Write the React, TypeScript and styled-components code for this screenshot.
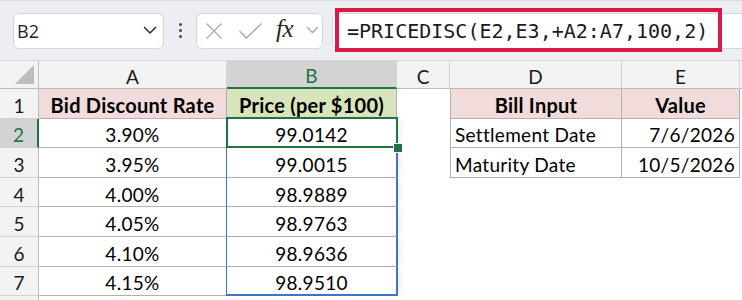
import React from 'react';
import styled, { createGlobalStyle } from 'styled-components';

const GlobalStyle = createGlobalStyle`
  html, body {
    margin: 0;
    padding: 0;
    background: #ffffff;
  }
`;

const GREEN = '#217346';
const BLUE = '#4472c4';
const GRID = '#d4d4d4';
const TABLE_LINE = '#b2b2b2';

const Page = styled.div`
  width: 742px;
  height: 300px;
  overflow: hidden;
  display: flex;
  flex-direction: column;
  background: #ffffff;
`;

const Toolbar = styled.div`
  height: 61px;
  flex: none;
  display: flex;
  align-items: center;
  padding-left: 13px;
  background: #eceef1;
  border-top: 1px solid #d9dbde;
  border-bottom: 1px solid #d6d6d6;
  box-sizing: border-box;
  font-family: 'Open Sans', 'Noto Sans', sans-serif;
`;

const NameBox = styled.div`
  width: 151px;
  height: 36px;
  box-sizing: border-box;
  display: flex;
  align-items: center;
  justify-content: space-between;
  padding: 0 6px 0 3px;
  background: #ffffff;
  border: 1px solid #d5d7da;
  border-radius: 6px;
  font-size: 18px;
  color: #1f1f1f;
`;

const Dots = styled.div`
  width: 32px;
  display: flex;
  flex-direction: column;
  align-items: center;
  gap: 3px;

  > span {
    width: 3px;
    height: 3px;
    border-radius: 50%;
    background: #4a4a4a;
  }
`;

const FxBox = styled.div`
  width: 127px;
  height: 36px;
  box-sizing: border-box;
  display: flex;
  align-items: center;
  padding-left: 8px;
  background: #ffffff;
  border: 1px solid #d5d7da;
  border-radius: 6px;
`;

const IconSlot = styled.div<{ $w: number; $gap?: number }>`
  width: ${(p) => p.$w}px;
  margin-left: ${(p) => p.$gap ?? 0}px;
  display: flex;
  align-items: center;
  justify-content: center;
`;

const FxLabel = styled.span`
  width: 22px;
  margin: -4px 0 0 13px;
  font-family: 'Liberation Serif', 'DejaVu Serif', serif;
  font-style: italic;
  font-size: 25px;
  color: #262626;
  letter-spacing: -0.5px;
`;

const FormulaBox = styled.div`
  position: relative;
  flex: 1;
  height: 36px;
  margin-left: 9px;
  margin-right: -10px;
  box-sizing: border-box;
  display: flex;
  align-items: center;
  padding-left: 14px;
  background: #ffffff;
  border: 1px solid #d5d7da;
  border-radius: 6px;
  font-family: 'DejaVu Sans Mono', 'Liberation Mono', monospace;
  font-size: 20px;
  color: #1a1a1a;
`;

const Annotation = styled.div`
  position: absolute;
  left: 2px;
  top: -6px;
  width: 387px;
  height: 44px;
  box-sizing: border-box;
  border: 4px solid #dc1845;
  pointer-events: none;
`;

const Sheet = styled.div`
  flex: 1;
  display: grid;
  grid-template-columns: 39px 188px 170px 53px 172px 118px 1fr;
  grid-template-rows: 28px repeat(7, 29.6px) 1fr;
  font-family: Lato, 'Noto Sans', sans-serif;
  font-size: 19px;
  color: #000000;
`;

const Corner = styled.div`
  position: relative;
  background: #f3f3f3;
  border-right: 1px solid #bdbdbd;
  border-bottom: 1px solid #bdbdbd;
  overflow: hidden;

  &::after {
    content: '';
    position: absolute;
    right: 4px;
    bottom: 4px;
    border-style: solid;
    border-width: 0 0 19px 19px;
    border-color: transparent transparent #bdbdbd transparent;
  }
`;

const ColHeader = styled.div<{ $active?: boolean }>`
  display: flex;
  align-items: center;
  justify-content: center;
  box-sizing: border-box;
  font-size: 19px;
  padding-top: 3px;
  background: ${(p) => (p.$active ? '#d3d3d3' : '#f3f3f3')};
  color: ${(p) => (p.$active ? GREEN : '#1a1a1a')};
  border-right: 1px solid ${GRID};
  border-bottom: ${(p) => (p.$active ? `2px solid ${GREEN}` : '1px solid #bdbdbd')};
`;

const RowHeader = styled.div<{ $active?: boolean }>`
  display: flex;
  align-items: center;
  justify-content: center;
  box-sizing: border-box;
  font-size: 19px;
  padding-top: 4px;
  background: ${(p) => (p.$active ? '#d3d3d3' : '#f3f3f3')};
  color: ${(p) => (p.$active ? GREEN : '#1a1a1a')};
  border-right: ${(p) => (p.$active ? `2px solid ${GREEN}` : '1px solid #bdbdbd')};
  border-bottom: 1px solid ${GRID};
`;

type Range = 'body' | 'end';

const Cell = styled.div<{
  $bg?: string;
  $bold?: boolean;
  $align?: 'left' | 'center' | 'right';
  $lined?: boolean;
  $leftLine?: boolean;
  $range?: Range;
  $selected?: boolean;
}>`
  position: relative;
  display: flex;
  align-items: center;
  box-sizing: border-box;
  padding: 4px 4px 0 4px;
  white-space: nowrap;
  background: ${(p) => p.$bg ?? '#ffffff'};
  font-weight: ${(p) => (p.$bold ? 700 : 400)};
  font-size: ${(p) => (p.$bold ? '20px' : 'inherit')};
  letter-spacing: ${(p) => (p.$bold ? '0.25px' : '0.3px')};
  justify-content: ${(p) =>
    p.$align === 'left' ? 'flex-start' : p.$align === 'right' ? 'flex-end' : 'center'};
  border-right: ${(p) =>
    p.$range ? `2px solid ${BLUE}` : p.$lined ? `1px solid ${TABLE_LINE}` : 'none'};
  border-bottom: ${(p) =>
    p.$range === 'end' ? `2px solid ${BLUE}` : p.$lined ? `1px solid ${TABLE_LINE}` : 'none'};
  border-left: ${(p) =>
    p.$range ? `1px solid ${BLUE}` : p.$leftLine ? `1px solid ${TABLE_LINE}` : 'none'};
  box-shadow: ${(p) => (p.$range ? '5px 0 6px -2px rgba(0, 0, 0, 0.07)' : 'none')};
  margin-left: ${(p) => (p.$range ? '-1px' : '0')};
  margin-right: ${(p) => (p.$range ? '-1px' : '0')};
  z-index: ${(p) => (p.$selected ? 3 : p.$range ? 1 : 0)};
`;

const Selection = styled.div`
  position: absolute;
  left: -1px;
  right: -2px;
  top: -2px;
  bottom: -1px;
  border: 2px solid ${GREEN};
  pointer-events: none;
`;

const FillHandle = styled.div`
  position: absolute;
  right: -6px;
  bottom: -6px;
  width: 8px;
  height: 8px;
  background: ${GREEN};
  outline: 1px solid #ffffff;
`;

const Chevron = ({ color, width }: { color: string; width: number }) => (
  <svg width={width} height={width / 2 + 2} viewBox="0 0 14 9" fill="none">
    <path d="M1.5 1.5 L7 7 L12.5 1.5" stroke={color} strokeWidth="1.5" strokeLinecap="round" strokeLinejoin="round" />
  </svg>
);

const rates = ['3.90%', '3.95%', '4.00%', '4.05%', '4.10%', '4.15%'];
const prices = ['99.0142', '99.0015', '98.9889', '98.9763', '98.9636', '98.9510'];
const bill = [
  { label: 'Settlement Date', value: '7/6/2026' },
  { label: 'Maturity Date', value: '10/5/2026' },
];

const PINK = '#f2dcdb';
const OLIVE = '#d8e4bc';

export default function App() {
  return (
    <Page>
      <GlobalStyle />
      <Toolbar>
        <NameBox>
          <span>B2</span>
          <Chevron color="#2b2b2b" width={14} />
        </NameBox>
        <Dots>
          <span />
          <span />
          <span />
        </Dots>
        <FxBox>
          <IconSlot $w={18}>
            <svg width="18" height="18" viewBox="0 0 18 18" fill="none">
              <path d="M1.5 1.5 L16.5 16.5 M16.5 1.5 L1.5 16.5" stroke="#a9a9a9" strokeWidth="1.4" />
            </svg>
          </IconSlot>
          <IconSlot $w={25} $gap={15}>
            <svg width="25" height="18" viewBox="0 0 25 18" fill="none">
              <path d="M1.5 9 L8.5 16 L23.5 1.5" stroke="#a9a9a9" strokeWidth="1.4" />
            </svg>
          </IconSlot>
          <FxLabel>fx</FxLabel>
          <IconSlot $w={13} $gap={8}>
            <Chevron color="#a9a9a9" width={13} />
          </IconSlot>
        </FxBox>
        <FormulaBox>
          <span>=PRICEDISC(E2,E3,+A2:A7,100,2)</span>
          <Annotation />
        </FormulaBox>
      </Toolbar>

      <Sheet>
        <Corner />
        <ColHeader>A</ColHeader>
        <ColHeader $active>B</ColHeader>
        <ColHeader>C</ColHeader>
        <ColHeader>D</ColHeader>
        <ColHeader>E</ColHeader>
        <ColHeader />

        <RowHeader>1</RowHeader>
        <Cell $bg={PINK} $bold $lined>Bid Discount Rate</Cell>
        <Cell $bg={OLIVE} $bold $lined>Price (per $100)</Cell>
        <Cell />
        <Cell $bg={PINK} $bold $lined $leftLine>Bill Input</Cell>
        <Cell $bg={PINK} $bold $lined>Value</Cell>
        <Cell />

        {rates.map((rate, i) => (
          <React.Fragment key={rate}>
            <RowHeader $active={i === 0}>{i + 2}</RowHeader>
            <Cell $lined>{rate}</Cell>
            <Cell
              $lined
              $range={i === rates.length - 1 ? 'end' : 'body'}
              $selected={i === 0}
            >
              {prices[i]}
              {i === 0 && (
                <Selection>
                  <FillHandle />
                </Selection>
              )}
            </Cell>
            <Cell />
            {bill[i] ? (
              <>
                <Cell $align="left" $lined $leftLine>{bill[i].label}</Cell>
                <Cell $align="right" $lined>{bill[i].value}</Cell>
              </>
            ) : (
              <>
                <Cell />
                <Cell />
              </>
            )}
            <Cell />
          </React.Fragment>
        ))}

        <RowHeader />
        <Cell />
        <Cell />
        <Cell />
        <Cell />
        <Cell />
        <Cell />
      </Sheet>
    </Page>
  );
}
